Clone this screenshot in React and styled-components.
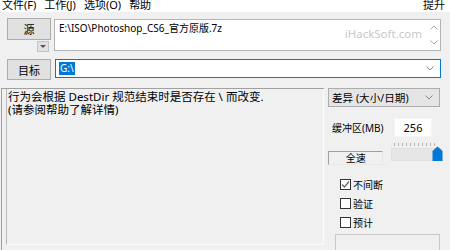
import React from "react";
import styled, { createGlobalStyle } from "styled-components";

const Global = createGlobalStyle`
  html, body { margin: 0; padding: 0; background: #f0f0f0; }
  * { box-sizing: border-box; }
`;

const FONT = `"Noto Sans", "Noto Sans CJK SC", sans-serif`;

const Window = styled.div`
  width: 450px;
  height: 250px;
  overflow: hidden;
  background: #f0f0f0;
  font-family: ${FONT};
  font-size: 10px;
  color: #000;
  display: flex;
  flex-direction: column;
`;

const MenuBar = styled.div`
  height: 12px;
  background: #fff;
  display: flex;
  align-items: flex-start;
  padding: 0 5px 0 2px;
  overflow: hidden;
`;

const MenuItem = styled.span`
  margin-top: -2px;
  font-size: 11px;
  line-height: 13px;
  margin-right: ${(p) => (p.$right ? "0" : "8px")};
  margin-left: ${(p) => (p.$right ? "auto" : "0")};
  white-space: nowrap;
`;

const Top = styled.div`
  padding: 6px 9px 0 7px;
  display: flex;
  flex-direction: column;
`;

const SourceRow = styled.div`
  display: flex;
  gap: 3px;
`;

const LeftCol = styled.div`
  width: 44px;
  display: flex;
  flex-direction: column;
  align-items: flex-end;
`;

const Button = styled.div`
  width: 44px;
  height: ${(p) => p.$h || 22}px;
  background: #e1e1e1;
  border: 1px solid #adadad;
  display: flex;
  align-items: center;
  justify-content: center;
  font-size: 11px;
`;

const DropBtn = styled.div`
  width: 12px;
  height: 11px;
  margin: 1px 2px 0 0;
  background: #e1e1e1;
  border: 1px solid #c4c4c4;
  display: flex;
  align-items: center;
  justify-content: center;
`;

const SourceBox = styled.div`
  position: relative;
  flex: 1;
  height: 32px;
  margin-top: 1px;
  background: #fff;
  border: 1px solid #b4b4b4;
  padding: 1px 0 0 4px;
  line-height: 14px;
  white-space: nowrap;
`;

const Watermark = styled.span`
  position: absolute;
  right: 18px;
  top: 7px;
  color: #c8c8c8;
  font-size: 11.5px;
  font-family: "Noto Sans", sans-serif;
`;

const Spinner = styled.div`
  position: absolute;
  right: 0;
  top: 0;
  bottom: 0;
  width: 13px;
  display: flex;
  flex-direction: column;
  justify-content: space-between;
  align-items: center;
  padding: 5px 0 5px;
`;

const TargetRow = styled.div`
  display: flex;
  gap: 4px;
  margin-top: 7px;
  align-items: flex-start;
`;

const Combo = styled.div`
  flex: 1;
  height: 19px;
  background: #fff;
  border: 1px solid #0078d7;
  display: flex;
  align-items: center;
  padding: 0 6px 0 3px;
`;

const Selected = styled.span`
  background: #0078d7;
  color: #fff;
  line-height: 13px;
  padding: 0 1px;
`;

const Chevron = styled.svg`
  margin-left: auto;
  flex: none;
`;

const Bottom = styled.div`
  display: flex;
  margin-top: 8px;
  flex: 1;
`;

const LeftPanel = styled.div`
  margin-left: 1px;
  width: 323px;
  border-left: 1px solid #a0a0a0;
  border-top: 1px solid #a0a0a0;
  padding-left: 4px;
  display: flex;
`;

const TextArea = styled.div`
  flex: 1;
  margin-bottom: 5px;
  border-left: 1px solid #b9b9b9;
  border-bottom: 1px solid #fcfcfc;
  border-right: 1px solid #fcfcfc;
  padding: 2px 0 0 1px;
  line-height: 12.5px;
  font-size: 11.5px;
`;

const RightCol = styled.div`
  width: 114px;
  margin-left: 4px;
  display: flex;
  flex-direction: column;
`;

const Select = styled.div`
  width: 112px;
  height: 19px;
  background: #e5e5e5;
  border: 1px solid #adadad;
  display: flex;
  align-items: center;
  padding: 0 6px 0 3px;
  white-space: nowrap;
  font-size: 10.6px;
`;

const BufferRow = styled.div`
  display: flex;
  align-items: center;
  margin-top: 11px;
  padding-left: 4px;
`;

const BufferLabel = styled.span`
  width: 62px;
  font-size: 10px;
`;

const NumInput = styled.div`
  width: 38px;
  height: 19px;
  background: #fff;
  border: 1px solid #f4f4f4;
  display: flex;
  align-items: center;
  justify-content: center;
  font-size: 11px;
`;

const SpeedRow = styled.div`
  display: flex;
  align-items: flex-start;
  margin-top: 6px;
`;

const SpeedBox = styled.div`
  width: 56px;
  height: 14px;
  margin-top: 8px;
  border: 1px solid #a0a0a0;
  border-right-color: #e8e8e8;
  border-bottom-color: #e8e8e8;
  display: flex;
  align-items: center;
  justify-content: center;
  font-size: 10px;
  line-height: 12px;
`;

const Slider = styled.div`
  width: 51px;
  margin-left: 8px;
  display: flex;
  flex-direction: column;
`;

const Ticks = styled.div`
  height: 3px;
  margin: 0 5px 0 3px;
  background: repeating-linear-gradient(
    to right,
    #b5b5b5 0 1px,
    transparent 1px 4px
  );
`;

const Track = styled.div`
  position: relative;
  height: 13px;
  margin-top: 2px;
  background: #e6e6e6;
  border: 1px solid #e0e0e0;
`;

const Thumb = styled.svg`
  position: absolute;
  right: -2px;
  top: -3px;
`;

const Checks = styled.div`
  display: flex;
  flex-direction: column;
  gap: 7px;
  margin-top: 13px;
  padding-left: 12px;
`;

const CheckRow = styled.label`
  display: flex;
  align-items: center;
  height: 12px;
  gap: 2px;
  font-size: 10px;
`;

const Box = styled.span`
  width: 11px;
  height: 11px;
  border: 1px solid #333;
  background: #fff;
  display: flex;
  align-items: center;
  justify-content: center;
`;

const Status = styled.div`
  margin: 6px 0 0 7px;
  width: 105px;
  flex: 1;
  border: 1px solid #c8c8c8;
  border-bottom: none;
`;

const Check = ({ checked, children }) => (
  <CheckRow>
    <Box>
      {checked && (
        <svg width="9" height="9" viewBox="0 0 9 9">
          <path d="M1 4.5 L3.5 7 L8 1.5" fill="none" stroke="#666" strokeWidth="1.2" />
        </svg>
      )}
    </Box>
    {children}
  </CheckRow>
);

const Down = ({ color = "#888" }) => (
  <Chevron width="8" height="5" viewBox="0 0 8 5">
    <path d="M0.5 0.5 L4 4 L7.5 0.5" fill="none" stroke={color} strokeWidth="1" />
  </Chevron>
);

export default function App() {
  return (
    <>
      <Global />
      <Window>
        <MenuBar>
          <MenuItem>文件(F)</MenuItem>
          <MenuItem>工作(J)</MenuItem>
          <MenuItem>选项(O)</MenuItem>
          <MenuItem>帮助</MenuItem>
          <MenuItem $right>提升</MenuItem>
        </MenuBar>
        <Top>
          <SourceRow>
            <LeftCol>
              <Button>源</Button>
              <DropBtn>
                <svg width="6" height="3" viewBox="0 0 6 3">
                  <path d="M0 0 H6 L3 3 Z" fill="#555" />
                </svg>
              </DropBtn>
            </LeftCol>
            <SourceBox>
              E:\ISO\Photoshop_CS6_官方原版.7z
              <Watermark>iHackSoft.com</Watermark>
              <Spinner>
                <svg width="8" height="5" viewBox="0 0 8 5">
                  <path d="M0.5 4.5 L4 1 L7.5 4.5" fill="none" stroke="#aaa" strokeWidth="1" />
                </svg>
                <svg width="8" height="5" viewBox="0 0 8 5">
                  <path d="M0.5 0.5 L4 4 L7.5 0.5" fill="none" stroke="#aaa" strokeWidth="1" />
                </svg>
              </Spinner>
            </SourceBox>
          </SourceRow>
          <TargetRow>
            <Button $h={21}>目标</Button>
            <Combo>
              <Selected>G:\</Selected>
              <Down />
            </Combo>
          </TargetRow>
        </Top>
        <Bottom>
          <LeftPanel>
            <TextArea>
              行为会根据 DestDir 规范结束时是否存在 \ 而改变.
              <br />
              (请参阅帮助了解详情)
            </TextArea>
          </LeftPanel>
          <RightCol>
            <Select>
              差异 (大小/日期)
              <Down />
            </Select>
            <BufferRow>
              <BufferLabel>缓冲区(MB)</BufferLabel>
              <NumInput>256</NumInput>
            </BufferRow>
            <SpeedRow>
              <SpeedBox>全速</SpeedBox>
              <Slider>
                <Ticks />
                <Track>
                  <Thumb width="11" height="15" viewBox="0 0 11 15">
                    <path d="M0.5 15 V5 L5.5 0.5 L10.5 5 V15 Z" fill="#0078d7" />
                  </Thumb>
                </Track>
              </Slider>
            </SpeedRow>
            <Checks>
              <Check checked>不间断</Check>
              <Check>验证</Check>
              <Check>预计</Check>
            </Checks>
            <Status />
          </RightCol>
        </Bottom>
      </Window>
    </>
  );
}
